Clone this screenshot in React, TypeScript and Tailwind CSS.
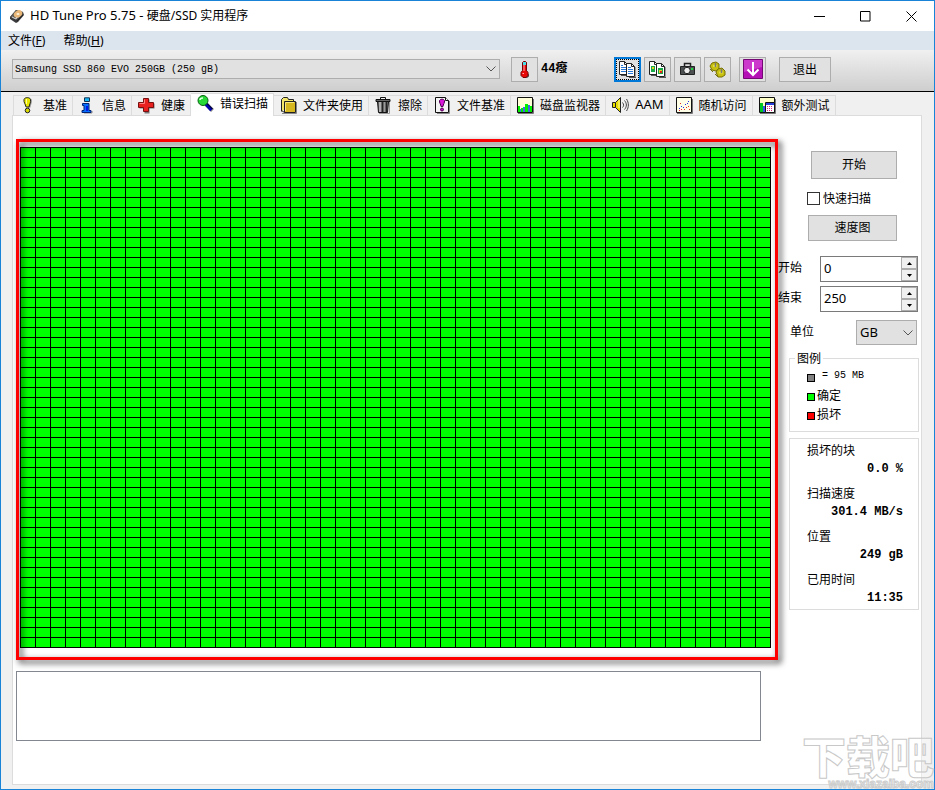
import type { ReactNode } from "react";

const uiFont = "font-['Noto_Sans','Noto_Sans_CJK_SC',sans-serif]";
const cnFont = "font-['Noto_Sans_CJK_SC',sans-serif]";
const monoFont = "font-['Liberation_Mono','Noto_Sans_CJK_SC',monospace]";

function Icon({ children }: { children: ReactNode }) {
  return (
    <svg width="17" height="17" viewBox="0 0 17 17" className="shrink-0" aria-hidden="true">
      {children}
    </svg>
  );
}

const DiskIcon = () => (
  <svg width="16" height="16" viewBox="0 0 16 16" className="shrink-0" aria-hidden="true">
    <path d="M1 9 7 2l7 2 1 3-6 7-2 1-6-4z" fill="#3a3a3c" />
    <path d="M1 9 7 2l7 2-6 8z" fill="#5d5a56" />
    <ellipse cx="9" cy="6" rx="4.5" ry="3.3" transform="rotate(-35 9 6)" fill="#e9b878" />
    <ellipse cx="9" cy="6" rx="1.5" ry="1.1" fill="#fff5df" />
    <path d="m3 9 4 2 1-2" stroke="#ddd" fill="none" />
    <path d="m8 13 6-6" stroke="#222" />
  </svg>
);

const BenchmarkIcon = () => (
  <Icon>
    <path d="M6 2c1-2 5-2 6 0 .5 3-1 5-1.500 8h-2C8 7 6 5 6 2z" transform="translate(-.2 .8)" fill="#999" />
    <path d="M4 2.500c.5-2.500 6-2.500 6.500 0 .5 3-1 4.500-1.500 7.500H6C5.500 7 3.500 5.500 4 2.500z" fill="#e8e800" stroke="#222" />
    <path d="M6.500 2v5" stroke="#ffffa0" />
    <circle cx="7.500" cy="13.500" r="2.300" fill="#d8d800" stroke="#222" />
  </Icon>
);

const InfoIcon = () => (
  <Icon>
    <path d="M5 16h8V14" stroke="#888" fill="none" />
    <path d="M5.500 .8h5v3.700h-5z" fill="#18b8f8" stroke="#103050" />
    <path d="M3.500 6.500h6.500v7h2v2h-9v-2h2v-5h-1.500z" fill="#0870ff" stroke="#002070" />
    <path d="M8 9v5" stroke="#0018e8" strokeWidth="2" />
  </Icon>
);

const HealthIcon = () => (
  <Icon>
    <path d="M6.500 2.500h5v4h5v5h-5v5h-5v-5h-5v-5h5z" fill="#777" />
    <path d="M5.500 1.500h5v4h5v5h-5v4h-5v-4h-5v-5h5z" fill="#e82020" stroke="#781010" />
    <path d="M6.500 2.500v4h-5" stroke="#ff8080" fill="none" />
  </Icon>
);

const ScanIcon = () => (
  <Icon>
    <path d="m9 9 6.500 6.500" stroke="#888" strokeWidth="4" />
    <path d="m9 9 5.500 6" stroke="#0000b0" strokeWidth="3.500" />
    <path d="m10 8.500 5.500 5.500" stroke="#000" />
    <circle cx="6" cy="5.500" r="5" fill="#28d838" stroke="#066010" />
    <path d="M3 5c0-1 1-2 3-2" stroke="#e0ffe0" strokeWidth="1.500" fill="none" />
  </Icon>
);

const FolderIcon = () => (
  <Icon>
    <path d="M2 16.500h14.500V5" stroke="#888" fill="none" />
    <path d="M1.500 14.500v-12l2-2h4l1 2h5v3" fill="#f5e76a" stroke="#222" />
    <path d="M4.500 15.500h11v-11h-11z" fill="#d8b820" stroke="#222" />
    <path d="M1.500 13.500 4.500 15.500" stroke="#222" />
    <path d="M5.500 14V5.500H14" stroke="#f8ea80" fill="none" />
  </Icon>
);

const EraseIcon = () => (
  <Icon>
    <path d="M4 16.500h10.500V4" stroke="#999" fill="none" />
    <path d="M1 2.500h14v2H1z" fill="#666" stroke="#111" />
    <path d="M5.500 2V.5h5V2" stroke="#111" fill="none" />
    <path d="M2.500 4.500h11l-1 11h-9z" fill="#666" stroke="#111" />
    <path d="M5 5v10" stroke="#ccc" strokeWidth="1.500" />
    <path d="M7.500 5v10M11.500 5v10" stroke="#222" />
    <path d="M9.500 5v10" stroke="#999" />
  </Icon>
);

const FileBenchmarkIcon = () => (
  <Icon>
    <path d="M3 16.500h12.500V4" stroke="#888" fill="none" />
    <path d="M1.500.5h10l3 3v12h-13z" fill="#f4f4f4" stroke="#111" />
    <path d="M11.500.5v3h3" fill="#fff" stroke="#111" />
    <path d="M5.500 3.500c1-1.800 4-1.800 5 0 .5 2-1.500 4-1.500 6H7c0-2-2-4-1.500-6z" fill="#d818d8" stroke="#500050" />
    <circle cx="8" cy="12.500" r="1.500" fill="#c010c0" stroke="#500050" />
  </Icon>
);

const MonitorIcon = () => (
  <Icon>
    <path d="M1 16.500h15.500V2" stroke="#777" fill="none" />
    <path d="M.5.5h15v15H.5z" fill="#ffffd8" stroke="#111" />
    <path d="M1 9h2v6H1zM4 11h2v4H4zM8 7h3v8H8zM13 9h2v6h-2z" fill="#00f000" />
    <path d="M3 12h1v3H3zM6 10h2v5H6zM11 8h2v7h-2z" fill="#4068e8" />
  </Icon>
);

const SpeakerIcon = () => (
  <Icon>
    <path d="M.5 5.500h3l5-5v15l-5-5h-3z" fill="#e8e000" stroke="#222" />
    <path d="M3.500 5.500v5" stroke="#222" />
    <path d="M7 3v8" stroke="#fffbb0" />
    <path d="M10.500 5.500c1.500 2 1.500 3.500 0 5M12.500 3.500c2.500 3 2.500 6 0 9M14.500 2c2.500 4 2.500 8 0 12" stroke="#444" fill="none" />
  </Icon>
);

const RandomIcon = () => (
  <Icon>
    <path d="M1 16.500h15.500V2" stroke="#777" fill="none" />
    <path d="M.5.5h15v15H.5z" fill="#ffffe8" stroke="#111" />
    <path d="M3 11h1v1H3zM5 9h1v1H5zM7 10h1v1H7zM9 7h1v1H9zM11 6h1v1h-1zM12 4h1v1h-1z" fill="#2030e8" />
    <path d="M3 13h1v1H3zM5 12h1v1H5zM8 12h1v1H8zM10 10h1v1h-1zM12 9h1v1h-1zM13 12h1v1h-1zM4 6h1v1H4z" fill="#e83020" />
  </Icon>
);

const ExtraIcon = () => (
  <Icon>
    <path d="M1 16.500h15.500V2" stroke="#777" fill="none" />
    <path d="M.5.5h15v15H.5z" fill="#ffffc8" stroke="#111" />
    <path d="M1 6h3v9H1z" fill="#00c820" />
    <path d="M4 9h2v6H4z" fill="#3858e8" />
    <path d="M6.500 5.500h9v10h-9z" fill="#fff" stroke="#111" />
    <path d="M7 6h8v2H7z" fill="#2840d8" />
    <path d="M8 9h1v1H8zM10 9h1v1h-1zM12 9h1v1h-1zM8 11h1v1H8zM10 11h1v1h-1zM12 11h1v1h-1zM8 13h1v1H8zM10 13h1v1h-1zM12 13h1v1h-1z" fill="#e02080" />
  </Icon>
);

const ThermometerIcon = () => (
  <Icon>
    <path d="M7 1.500h4v10l2 2v2l-2 1.500H7z" fill="#555" />
    <path d="M6.500 1.500l1-1h2l1 1v8l1.500 2v3l-2 2h-3l-2-2v-3l1.500-2z" fill="#e80808" stroke="#700" />
    <path d="M7 1h3v3H7z" fill="#48e0e8" />
    <path d="M8 4v6M6.500 12.500h1.500" stroke="#ffb0b0" />
  </Icon>
);

const CopyIcon = ({ image = false }: { image?: boolean }) => (
  <Icon>
    <path d="M2 14.500h6M10 16.500h7V6" stroke="#555" fill="none" />
    <path d="M.5.5h5l3 3v10h-8z" fill="#fff" stroke="#222" />
    <path d="M5.500.5v3h3" fill="none" stroke="#222" />
    <path d="M7.500 2.500h5l3 3v10h-8z" fill="#fff" stroke="#222" />
    <path d="M12.500 2.500v3h3" fill="none" stroke="#222" />
    {image ? (
      <>
        <path d="M2 5h4v6H2z" fill="#18a848" />
        <path d="M9 7h5v6H9z" fill="#18a848" />
        <path d="M3 6h2v2H3zM10 9h3v3h-3z" fill="#e8d020" />
        <path d="M11 10h2v2h-2z" fill="#e02020" />
      </>
    ) : (
      <path d="M2 4.500h2M2 6.500h5M2 8.500h5M2 10.500h5M9 6.500h3M9 8.500h5M9 10.500h5M9 12.500h5" stroke="#2878d8" />
    )}
  </Icon>
);

const CameraIcon = () => (
  <Icon>
    <path d="M5.500 5V2.500h6V5" stroke="#222" strokeWidth="1.500" fill="none" />
    <path d="M1.500 5.500h14v8h-14z" fill="#4c5050" stroke="#222" />
    <circle cx="8" cy="9.500" r="3.200" fill="#eee" stroke="#222" />
    <path d="M12 7h2v2h-2z" fill="#20d840" />
  </Icon>
);

const GearsIcon = () => (
  <Icon>
    <path d="m1 5 2-3 4-1 3 2v5l-3 2-4-1z" fill="#c8c010" stroke="#777000" />
    <path d="m7 11 2-3 4-1 3 3v4l-3 2H9z" fill="#c8c010" stroke="#777000" />
    <path d="M4 5h4M10 11.500h4" stroke="#e4e040" strokeWidth="2" />
    <path d="M6.500 2v4M12.500 8v4" stroke="#777" strokeWidth="1.500" />
    <path d="m1 8 3 3M6 13l3 3" stroke="#777010" />
  </Icon>
);

const DownloadIcon = () => (
  <svg width="20" height="20" viewBox="0 0 20 20" aria-hidden="true">
    <path d="M.5.5h19v19H.5z" fill="#b510b5" stroke="#750875" />
    <path d="M1 1h18v7L1 13z" fill="#cc38cc" />
    <path d="M10 3v13M4.500 10.500 10 16l5.500-5.500" stroke="#fff" strokeWidth="2" fill="none" />
  </svg>
);

const Chevron = () => (
  <svg
    width="10"
    height="6"
    viewBox="0 0 10 6"
    className="pointer-events-none absolute top-1/2 right-1 -translate-y-1/2"
    aria-hidden="true"
  >
    <path d="m.5.5 4.500 4.500L9.500.5" stroke="#555" fill="none" />
  </svg>
);

const tabs = [
  { label: "基准", icon: BenchmarkIcon },
  { label: "信息", icon: InfoIcon },
  { label: "健康", icon: HealthIcon },
  { label: "错误扫描", icon: ScanIcon, active: true },
  { label: "文件夹使用", icon: FolderIcon },
  { label: "擦除", icon: EraseIcon },
  { label: "文件基准", icon: FileBenchmarkIcon },
  { label: "磁盘监视器", icon: MonitorIcon },
  { label: "AAM", icon: SpeakerIcon, latin: true },
  { label: "随机访问", icon: RandomIcon },
  { label: "额外测试", icon: ExtraIcon },
];

const legend = [
  { color: "bg-[#808080]", label: "= 95 MB", mono: true },
  { color: "bg-[#00ff00]", label: "确定" },
  { color: "bg-[#ff0000]", label: "损坏" },
];

const stats = [
  { label: "损坏的块", value: "0.0 %" },
  { label: "扫描速度", value: "301.4 MB/s" },
  { label: "位置", value: "249 gB" },
  { label: "已用时间", value: "11:35" },
];

const blocks = Array.from({ length: 50 * 50 }, (_, i) => i);

const toolButton = "flex h-[25px] w-[27px] shrink-0 items-center justify-center border border-[#adadad] bg-[#e1e1e1]";
const pushButton = "border border-[#adadad] bg-[#e1e1e1] text-center";

function TitleBar() {
  return (
    <header className="flex h-[30px] items-center bg-white pl-2">
      <DiskIcon />
      <h1 className={`ml-[5px] flex-1 text-[12px] whitespace-pre ${uiFont}`}>
        <span className="text-[13px]">HD Tune Pro 5.75 - </span>硬盘/SSD 实用程序
      </h1>
      <button aria-label="最小化" className="flex h-full w-[46px] items-center justify-center">
        <svg width="11" height="11" viewBox="0 0 11 11"><path d="M0 5.500h11" stroke="#000" /></svg>
      </button>
      <button aria-label="最大化" className="flex h-full w-[46px] items-center justify-center">
        <svg width="11" height="11" viewBox="0 0 11 11"><path d="M.5.5h9.500v9.500H.5z" stroke="#000" fill="none" /></svg>
      </button>
      <button aria-label="关闭" className="flex h-full w-[46px] items-center justify-center">
        <svg width="11" height="11" viewBox="0 0 11 11"><path d="m.5.5 10 10M10.500.5l-10 10" stroke="#000" /></svg>
      </button>
    </header>
  );
}

function Toolbar() {
  return (
    <div className="flex h-[42px] items-center border-b border-black bg-linear-to-b from-[#f0f0f0] to-[#cecece] pb-[3px] pl-[11px]">
      <div className="relative h-[20px] max-w-[488px] flex-1">
        <select
          aria-label="驱动器"
          className={`block h-full w-full appearance-none border border-[#adadad] bg-[#e1e1e1] px-0.5 text-[10px] ${monoFont}`}
        >
          <option>Samsung SSD 860 EVO 250GB (250 gB)</option>
        </select>
        <Chevron />
      </div>
      <button aria-label="温度" className={`ml-[11px] ${toolButton}`}>
        <ThermometerIcon />
      </button>
      <span className={`ml-[3px] w-[73px] text-[12px] font-bold ${monoFont}`}>44癈</span>
      <div className="flex gap-[3px]">
        <button aria-label="复制文本" className="flex h-[25px] w-[27px] items-center justify-center border-2 border-[#0078d7] bg-[#e1e1e1] outline-1 -outline-offset-3 outline-dotted outline-black">
          <CopyIcon />
        </button>
        <button aria-label="复制图像" className={toolButton}>
          <CopyIcon image />
        </button>
        <button aria-label="截图" className={toolButton}>
          <CameraIcon />
        </button>
        <button aria-label="设置" className={toolButton}>
          <GearsIcon />
        </button>
      </div>
      <button aria-label="保存" className={`ml-2 ${toolButton}`}>
        <DownloadIcon />
      </button>
      <button className={`ml-[13px] h-[25px] w-[52px] text-[12px] ${pushButton}`}>退出</button>
    </div>
  );
}

function Tabs() {
  return (
    <div role="tablist" className="flex h-[23px] items-end pl-3">
      {tabs.map(({ label, icon: TabIcon, active, latin }) => (
        <button
          key={label}
          role="tab"
          aria-selected={!!active}
          className={
            active
              ? "z-10 -mb-px flex h-[23px] items-center border-t border-r border-[#dcdcdc] bg-white pr-[5px] pb-1 pl-[6px]"
              : "flex h-[20px] items-center border-t border-r border-[#dcdcdc] pr-[5px] pb-px pl-[6px] first:border-l"
          }
        >
          <TabIcon />
          <span className={latin ? `ml-[6px] text-[13px] ${uiFont}` : "ml-[6px] text-[12px] whitespace-nowrap"}>
            {label}
          </span>
        </button>
      ))}
    </div>
  );
}

function BlockMap() {
  return (
    <div className="relative z-10 pt-2 pr-[7px] pb-[12px] pl-1">
      <div className="grid grid-cols-50 gap-px border border-black bg-black">
        {blocks.map((block) => (
          <div key={block} className="h-[9px] bg-[#00ff00]" />
        ))}
      </div>
      {/* Highlight frame */}
      <div className="pointer-events-none absolute inset-0 border-[3px] border-[#ff0000] drop-shadow-[3px_3px_3px_rgba(0,0,0,0.8)]" />
    </div>
  );
}

function RangeField({ id, label, value }: { id: string; label: string; value: string }) {
  return (
    <div className="flex items-center">
      <label htmlFor={id} className="w-[42px] pb-1">{label}</label>
      <div className="flex h-[26px] w-[98px] border border-[#7a7a7a] bg-white">
        <input id={id} defaultValue={value} className={`min-w-0 flex-1 px-[3px] pb-0.5 text-[13px] outline-none ${uiFont}`} />
        <div className="flex w-[16px] flex-col">
          <button aria-label={`${label} +`} className="flex flex-1 items-center justify-center border border-[#adadad] bg-[#f0f0f0]">
            <svg width="5" height="3" viewBox="0 0 5 3"><path d="M0 3 2.500 0 5 3z" /></svg>
          </button>
          <button aria-label={`${label} -`} className="flex flex-1 items-center justify-center border border-[#adadad] bg-[#f0f0f0]">
            <svg width="5" height="3" viewBox="0 0 5 3"><path d="M0 0h5L2.500 3z" /></svg>
          </button>
        </div>
      </div>
    </div>
  );
}

function Sidebar() {
  return (
    <aside className="w-[141px] shrink-0 pt-3 text-[12px] leading-4">
      <div className="flex flex-col items-end pr-[22px]">
        <button className={`h-[28px] w-[86px] pb-0.5 ${pushButton}`}>开始</button>
        <label className="mt-[11px] flex w-[90px] items-center gap-[3px] whitespace-nowrap">
          <input type="checkbox" className="size-[13px] appearance-none border border-[#333] bg-white" />
          快速扫描
        </label>
        <button className={`mt-[9px] h-[26px] w-[89px] pb-0.5 ${pushButton}`}>速度图</button>
      </div>

      <div className="mt-[15px] flex flex-col gap-1">
        <RangeField id="range-start" label="开始" value="0" />
        <RangeField id="range-end" label="结束" value="250" />
      </div>

      <div className="mt-2 flex items-center justify-between pr-0.5 pl-[12px]">
        <label htmlFor="unit" className="pb-1">单位</label>
        <div className="relative h-[25px] w-[61px]">
          <select
            id="unit"
            className={`block h-full w-full appearance-none border border-[#adadad] bg-[#e1e1e1] px-[3px] pb-0.5 text-[13px] ${uiFont}`}
          >
            <option>GB</option>
          </select>
          <Chevron />
        </div>
      </div>

      <fieldset className="mt-[5px] ml-[11px] h-[82px] border border-[#dcdcdc] pl-[17px]">
        <legend className="-ml-3 px-0.5">图例</legend>
        {legend.map((item) => (
          <div key={item.label} className="flex h-[19px] items-center">
            <span className={`mt-1 mr-0.5 size-2 border border-black ${item.color}`} />
            <span className={item.mono ? `ml-[5px] text-[10px] ${monoFont}` : ""}>{item.label}</span>
          </div>
        ))}
      </fieldset>

      <dl className="mt-[6px] ml-[11px] flex flex-col gap-2 border border-[#dcdcdc] py-[3px] pr-[15px] pl-[17px]">
        {stats.map((stat) => (
          <div key={stat.label}>
            <dt>{stat.label}</dt>
            <dd className={`mt-[3px] text-right text-[12px] font-bold ${monoFont}`}>{stat.value}</dd>
          </div>
        ))}
      </dl>
    </aside>
  );
}

function Watermark() {
  return (
    <div aria-hidden="true" className="pointer-events-none absolute right-0 -bottom-px z-20 text-white/40">
      <div className="text-[44px] leading-[46px] font-black [-webkit-text-stroke:1px_#c8c8c8]">下载吧</div>
      <div className="text-right font-['Liberation_Sans',sans-serif] text-[12px] leading-3 font-bold [-webkit-text-stroke:1px_#cccccc]">
        www.xiazaiba.com
      </div>
    </div>
  );
}

export default function App() {
  return (
    <div className={`relative flex min-h-screen flex-col border border-[#1883d7] bg-[#f0f0f0] text-[12px] text-black ${cnFont}`}>
      <TitleBar />
      <nav className={`flex h-[19px] items-center gap-[18px] bg-[#dce4ee] pl-[7px] ${uiFont}`}>
        <button>文件(<u>F</u>)</button>
        <button>帮助(<u>H</u>)</button>
      </nav>
      <Toolbar />
      <Tabs />
      <main className="mr-3 mb-1 ml-[11px] flex flex-1 border border-[#dcdcdc] bg-white pt-[23px] pr-0.5 pl-[3px]">
        <div className="min-w-0 flex-1">
          <BlockMap />
          <textarea
            aria-label="日志"
            readOnly
            className="mt-[11px] block h-[70px] w-[calc(100%-17px)] resize-none border border-[#828790] bg-white"
          />
        </div>
        <Sidebar />
      </main>
      <Watermark />
    </div>
  );
}
